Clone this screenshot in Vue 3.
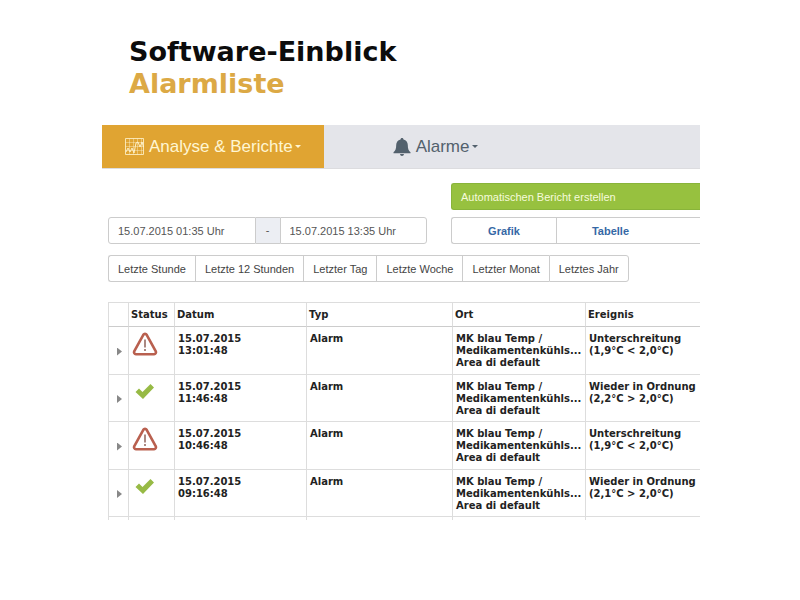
<script setup>
import { ref } from 'vue'

const from = ref('15.07.2015 01:35 Uhr')
const to = ref('15.07.2015 13:35 Uhr')

const ranges = ['Letzte Stunde', 'Letzte 12 Stunden', 'Letzter Tag', 'Letzte Woche', 'Letzter Monat', 'Letztes Jahr']

const place = ['MK blau Temp /', 'Medikamentenkühls...', 'Area di default']

const rows = [
    { ok: false, time: '13:01:48', event: 'Unterschreitung', value: '(1,9°C < 2,0°C)' },
    { ok: true, time: '11:46:48', event: 'Wieder in Ordnung', value: '(2,2°C > 2,0°C)' },
    { ok: false, time: '10:46:48', event: 'Unterschreitung', value: '(1,9°C < 2,0°C)' },
    { ok: true, time: '09:16:48', event: 'Wieder in Ordnung', value: '(2,1°C > 2,0°C)' }
]
</script>

<template>
    <main class="page">
        <h1 class="title">
            <span class="title__main">Software-Einblick</span>
            <span class="title__sub">Alarmliste</span>
        </h1>

        <nav class="nav">
            <a href="#" class="nav__item nav__item--active">
                <svg class="nav__chart" viewBox="0 0 20 18" fill="none" stroke="currentColor">
                    <path d="M.5 .5h18v16H.5z" stroke-width=".8" />
                    <path d="M.5 4.5h18M.5 8.5h18M.5 12.5h18M4.5 .5v16M8.5 .5v16M12.5 .5v16M16.5 .5v16" opacity=".4" />
                    <path d="M1 14l2-4 2 4 2-4 2 5 2-10 2-1 2 5 2-5 1.500 5" stroke-width=".9" />
                </svg>
                <span>Analyse &amp; Berichte</span>
                <span class="caret"></span>
            </a>
            <a href="#" class="nav__item">
                <svg class="nav__bell" viewBox="0 0 18 18" fill="currentColor">
                    <path d="M9 0c.9 0 1.500.6 1.500 1.500 2.800.7 4.300 2.800 4.300 5.600 0 4 .8 5.600 2.700 7.200v.9H.5v-.9c1.900-1.600 2.700-3.200 2.700-7.200 0-2.800 1.500-4.900 4.300-5.600C7.500.6 8.100 0 9 0zM7 16h4c-.2 1.200-.9 2-2 2s-1.800-.8-2-2z" />
                </svg>
                <span>Alarme</span>
                <span class="caret"></span>
            </a>
        </nav>

        <section class="content">
            <div class="tools">
                <div class="period">
                    <input v-model="from" class="period__input" type="text" aria-label="Von">
                    <span class="period__sep">-</span>
                    <input v-model="to" class="period__input" type="text" aria-label="Bis">
                </div>
                <div class="actions">
                    <button class="report" type="button">Automatischen Bericht erstellen</button>
                    <div class="views">
                        <button class="views__btn" type="button">Grafik</button>
                        <button class="views__btn" type="button">Tabelle</button>
                    </div>
                </div>
            </div>

            <div class="ranges">
                <button v-for="range in ranges" :key="range" class="ranges__btn" type="button">{{ range }}</button>
            </div>

            <table class="list">
                <colgroup>
                    <col class="list__col-toggle">
                    <col class="list__col-status">
                    <col class="list__col-date">
                    <col class="list__col-type">
                    <col class="list__col-place">
                    <col>
                </colgroup>
                <thead>
                    <tr>
                        <th></th>
                        <th>Status</th>
                        <th>Datum</th>
                        <th>Typ</th>
                        <th>Ort</th>
                        <th>Ereignis</th>
                    </tr>
                </thead>
                <tbody>
                    <tr v-for="row in rows" :key="row.time">
                        <td class="list__toggle">
                            <button type="button" class="expand" aria-label="Details"></button>
                        </td>
                        <td class="list__status">
                            <svg v-if="row.ok" class="icon" viewBox="0 0 26 26">
                                <path d="M3.500 13l3.500-3.500 3.500 3.500L18.500 5l3.500 3.500L11 20z" fill="#97ba45" />
                            </svg>
                            <svg v-else class="icon" viewBox="0 0 26 26" fill="none">
                                <path d="M11.300 3.800a2 2 0 0 1 3.400 0l9.100 16.500a2 2 0 0 1-1.700 2.900H3.900a2 2 0 0 1-1.700-2.900z" stroke="#b9604f" stroke-width="2.600" />
                                <path d="M13 8.500v8M13 18v2" stroke="#7d4b41" stroke-width="1.300" />
                            </svg>
                        </td>
                        <td>15.07.2015<br>{{ row.time }}</td>
                        <td>Alarm</td>
                        <td><div v-for="line in place" :key="line">{{ line }}</div></td>
                        <td>{{ row.event }}<br>{{ row.value }}</td>
                    </tr>
                </tbody>
                <tfoot>
                    <tr>
                        <td v-for="i in 6" :key="i"></td>
                    </tr>
                </tfoot>
            </table>
        </section>
    </main>
</template>

<style>
body {
    background: #fff;
}
</style>

<style scoped>
.page {
    padding: 36px 100px 0;
    overflow: hidden;
    font-family: "Liberation Sans", Arial, sans-serif;
    font-size: 11px;
    color: #555;
}

button,
input {
    margin: 0;
    font: inherit;
    box-sizing: border-box;
}

.title {
    margin: 0 0 25px 29px;
    font-family: "DejaVu Sans", Verdana, sans-serif;
    font-size: 27px;
    font-weight: bold;
    line-height: 32px;
    color: #0c0c0c;
}

.title__main,
.title__sub {
    display: block;
}

.title__sub {
    color: #dca945;
}

.nav {
    display: flex;
    height: 43px;
    margin-left: 2px;
    background: #e4e5ea;
    border-bottom: 1px solid #dcdcdf;
}

.nav__item {
    display: flex;
    align-items: center;
    gap: 4px;
    padding: 0 68px;
    font-size: 17px;
    color: #53616d;
    text-decoration: none;
}

.nav__item--active {
    padding: 0 23px;
    background: #e0a432;
    color: #fff6d2;
}

.nav__chart {
    width: 20px;
    height: 18px;
}

.nav__bell {
    width: 20px;
    height: 18px;
}

.caret {
    margin-left: -2px;
    border: 3px solid transparent;
    border-top-color: currentColor;
    border-bottom: 0;
}

.content {
    padding: 14px 0 0 8px;
}

.tools {
    display: flex;
    align-items: flex-end;
    gap: 24px;
}

.period {
    display: flex;
    width: 319px;
    height: 27px;
}

.period__input {
    flex: 1;
    min-width: 0;
    padding: 0 9px;
    border: 1px solid #ccc;
    border-radius: 3px 0 0 3px;
    background: #fff;
    color: #555;
}

.period__input:last-child {
    border-radius: 0 3px 3px 0;
}

.period__sep {
    width: 24px;
    border: solid #ccc;
    border-width: 1px 0;
    background: #eceef3;
    line-height: 25px;
    text-align: center;
}

.actions {
    flex: 1;
}

.report {
    display: block;
    width: 100%;
    height: 27px;
    margin-bottom: 7px;
    padding: 0 9px;
    border: 1px solid #89b43a;
    border-right: 0;
    border-radius: 3px 0 0 3px;
    background: #97c13f;
    color: #f6fbdc;
    text-align: left;
}

.views {
    display: flex;
}

.views__btn {
    width: 105px;
    height: 27px;
    border: 1px solid #ccc;
    border-right: 0;
    border-radius: 3px 0 0 3px;
    background: #fff;
    color: #3668a5;
    font-weight: bold;
}

.views__btn:last-child {
    flex: 1;
    padding-right: 42px;
    border-radius: 0;
}

.ranges {
    display: flex;
    margin: 11px 0 20px;
}

.ranges__btn {
    height: 27px;
    padding: 0 9px;
    border: 1px solid #ccc;
    border-right-width: 0;
    background: #fff;
    color: #444;
    white-space: nowrap;
}

.ranges__btn:first-child {
    border-radius: 3px 0 0 3px;
}

.ranges__btn:last-child {
    border-right-width: 1px;
    border-radius: 0 3px 3px 0;
}

.list {
    width: 100%;
    table-layout: fixed;
    border-collapse: separate;
    border-spacing: 0;
    font-family: "DejaVu Sans", Verdana, sans-serif;
    font-size: 10px;
    font-weight: bold;
    line-height: 12px;
    color: #222;
}

.list__col-toggle {
    width: 20px;
}

.list__col-status {
    width: 46px;
}

.list__col-date {
    width: 132px;
}

.list__col-type {
    width: 146px;
}

.list__col-place {
    width: 133px;
}

th,
td {
    box-sizing: border-box;
    padding: 6px 0 0 3px;
    border-left: 1px solid #ddd;
    border-bottom: 1px solid #ddd;
    text-align: left;
    vertical-align: top;
    white-space: nowrap;
}

th {
    height: 25px;
    padding: 0 0 0 2px;
    border-top: 1px solid #ddd;
    border-bottom-color: #ccc;
    vertical-align: middle;
}

tbody td {
    height: 48px;
}

tbody tr:nth-child(even) td {
    height: 47px;
}

tfoot td {
    height: 3px;
    padding: 0;
    border-bottom: 0;
}

.list .list__toggle {
    padding: 2px 0 0 8px;
    vertical-align: middle;
}

.list .list__status {
    padding: 4px 0 0 3px;
}

.expand {
    display: block;
    width: 5px;
    height: 8px;
    padding: 0;
    border: 0;
    background: #888;
    clip-path: polygon(0 0, 100% 50%, 0 100%);
}

.icon {
    display: block;
    width: 26px;
    height: 26px;
}
</style>
